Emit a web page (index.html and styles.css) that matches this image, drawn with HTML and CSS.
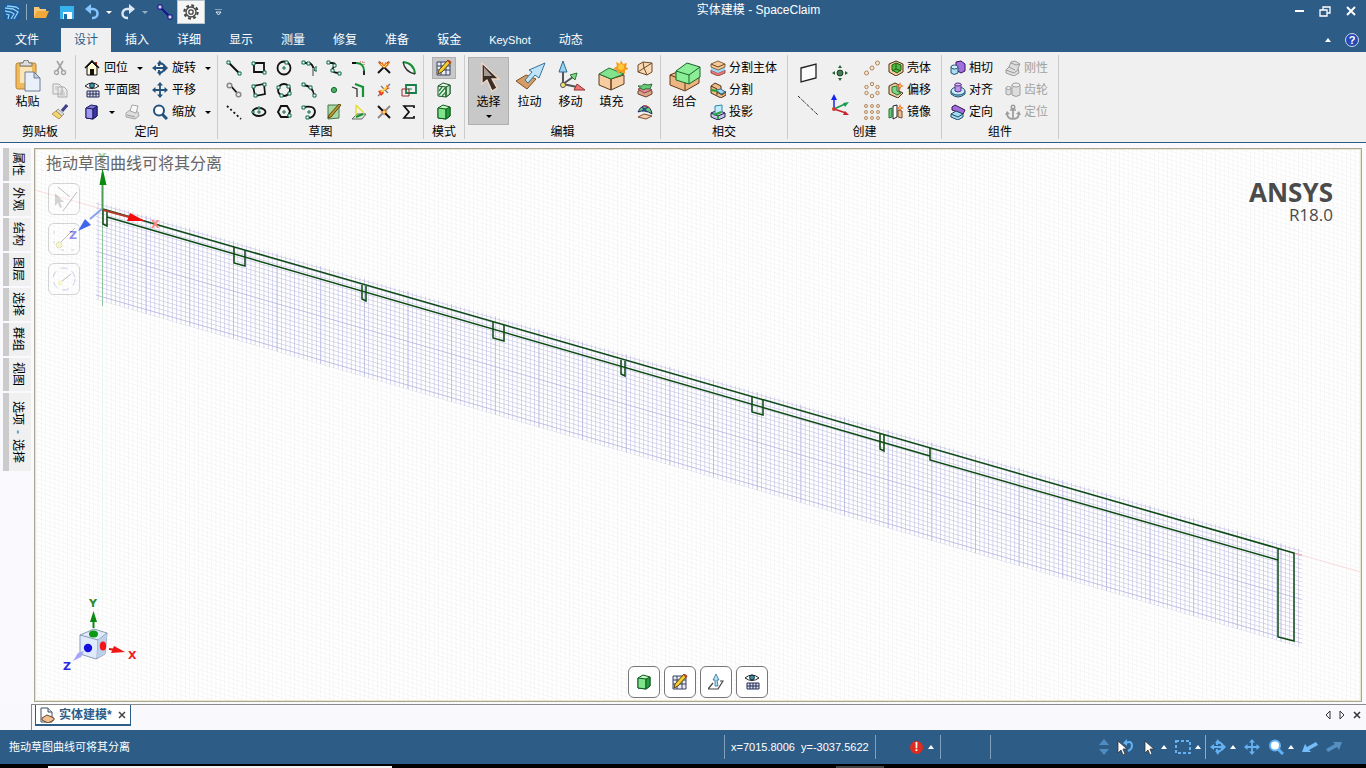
FILE: index.html
```html
<!DOCTYPE html>
<html lang="zh-CN">

<head>
    <meta charset="UTF-8">
    <meta name="viewport" content="width=device-width, initial-scale=1.0">
    <title>实体建模 - SpaceClaim</title>
    <link rel="stylesheet" href="styles.css">
</head>

<body>

    <!-- icons -->
    <svg class="sprite" aria-hidden="true">
        <symbol id="logo" viewBox="0 0 16 16"><rect width="16" height="16" rx="2" fill="#1c5c9c"/><path d="M1 4l8 1 5 3-4 7M1 7l6 1 3 2-3 5M3 2l9 1 3 2M2 10l3 1-1 4" fill="none" stroke="#8fd0f5" stroke-width="1.3"/></symbol>
        <symbol id="folder" viewBox="0 0 16 16"><path d="M1 14V3h5l1 2h6v2" fill="#f7c777"/><path d="M1 14L4 7h12l-3 7z" fill="#f2a93b"/></symbol>
        <symbol id="save" viewBox="0 0 16 16"><path d="M1 2h14v13H1z" fill="#35b3ea"/><path d="M4 8h9v7H4z" fill="#fff"/><path d="M5 10h3v5H5z" fill="#1b6ca8"/></symbol>
        <symbol id="undo" viewBox="0 0 16 16"><path d="M3 5h6a4 4 0 0 1 0 9H8" fill="none" stroke="#86c5ff" stroke-width="2.6"/><path d="M7 0v10L1 5z" fill="#86c5ff"/></symbol>
        <symbol id="redo" viewBox="0 0 16 16"><path d="M13 5H7a4 4 0 0 0 0 9h1" fill="none" stroke="#dce9f4" stroke-width="2.4"/><path d="M9 0v10l6-5z" fill="#dce9f4"/></symbol>
        <symbol id="sketchline" viewBox="0 0 16 16"><path d="M3 3l10 10" stroke="#15138a" stroke-width="2"/><path d="M1 1h4v4H1zM11 11h4v4h-4z" fill="#d6d0f5" stroke="#15138a"/></symbol>
        <symbol id="gear" viewBox="0 0 16 16"><circle cx="8" cy="8" r="6.6" fill="none" stroke="#444" stroke-width="2.2" stroke-dasharray="2.8 2.4"/><circle cx="8" cy="8" r="5" fill="#f3f3f3" stroke="#444" stroke-width="1.3"/><circle cx="8" cy="8" r="2.2" fill="#fff" stroke="#444" stroke-width="1.3"/></symbol>

        <symbol id="paste" viewBox="0 0 32 32"><rect x="4" y="3" width="20" height="26" rx="2" fill="#f0b95b" stroke="#b98432"/><path d="M8 7h12v16H8z" fill="#fbe4b6"/><path d="M8 6V3h3a3 3 0 0 1 6 0h3v3z" fill="#ddd" stroke="#777"/><path d="M13 12h9l6 6v13H13z" fill="#eaf0fa" stroke="#6e7e98"/><path d="M22 12v6h6z" fill="#c4cfe2" stroke="#6e7e98"/></symbol>
        <symbol id="cut" viewBox="0 0 16 16"><path d="M5 1l6 10M11 1L5 11" stroke="#a2a2a2" stroke-width="1.6"/><circle cx="4.500" cy="12.500" r="2" fill="none" stroke="#a2a2a2" stroke-width="1.3"/><circle cx="11.500" cy="12.500" r="2" fill="none" stroke="#a2a2a2" stroke-width="1.3"/></symbol>
        <symbol id="copy" viewBox="0 0 16 16"><path d="M1 2h6l3 3v7H1zM6 5h6l3 3v7H6z" fill="#ececec" stroke="#aaa"/><path d="M8 9h4M8 11h5M8 13h5M3 5h3M3 7h2" stroke="#bbb"/></symbol>
        <symbol id="brush" viewBox="0 0 16 16"><path d="M15 1l-5 6" stroke="#41418e" stroke-width="3"/><path d="M6 5l6 5-2 2-6-5z" fill="#ddd" stroke="#777" stroke-width=".7"/><path d="M4 7l6 5-3 3-7-5z" fill="#f2d676" stroke="#a8853a" stroke-width=".8"/></symbol>
        <symbol id="home" viewBox="0 0 16 16"><path d="M11 2h2v5h-2z" fill="#a31b1b"/><path d="M1 8l7-7 7 7" fill="none" stroke="#111" stroke-width="1.6"/><path d="M3 7l5-5 5 5v8H3z" fill="#fff8d4" stroke="#111"/><path d="M6 9h4v6H6z" fill="#111"/></symbol>
        <symbol id="eyegrid" viewBox="0 0 16 16"><path d="M1 4Q8-2 15 4 8 9 1 4z" fill="#fff" stroke="#222"/><circle cx="8" cy="3.500" r="2.400" fill="#3c95a8" stroke="#123"/><path d="M3 9h12v6H3z" fill="#dfe3ee" stroke="#222b55"/><path d="M3 12h12M6 9v6M9 9v6M12 9v6" stroke="#222b55"/></symbol>
        <symbol id="cube-blue" viewBox="0 0 16 16"><path d="M2 4l5-3 6 1v10l-4 3-7-1z" fill="#7c79d8" stroke="#1c1a5e"/><path d="M2 4l7 1v10l-7-1z" fill="#9d9af0" stroke="#1c1a5e"/><path d="M9 5l4-3v10l-4 3z" fill="#3a36a3" stroke="#1c1a5e"/></symbol>
        <symbol id="printout" viewBox="0 0 16 16"><path d="M2 9l4-3 8 2 1 4-4 3-9-2z" fill="#ddd" stroke="#a6a6a6"/><path d="M6 7l2-6 6 1-2 7z" fill="#f7f7f7" stroke="#a6a6a6"/><path d="M3 11l8 2" stroke="#999"/></symbol>
        <symbol id="rotate" viewBox="0 0 16 16"><path d="M2 8h12" stroke="currentColor" stroke-width="2"/><path d="M4 5v6L0 8zM16 8l-4-4v8zM5 4l3-4 2 5zM5 12l3 4 2-5z" fill="currentColor"/><path d="M8 3q5 1 4 5 0 4-4 5M7 3v3M7 10v3" fill="none" stroke="currentColor" stroke-width="1.900"/></symbol>
        <symbol id="pan" viewBox="0 0 16 16"><path d="M2 8h12M8 2v12" stroke="currentColor" stroke-width="1.8"/><path d="M3.500 5v6L0 8zM12.500 5v6L16 8zM5 3.500h6L8 0zM5 12.500h6L8 16z" fill="currentColor"/></symbol>
        <symbol id="magnify" viewBox="0 0 16 16"><circle cx="7" cy="6.500" r="5" fill="#fff" stroke="currentColor" stroke-width="2"/><path d="M10.500 10.500L15 15" stroke="currentColor" stroke-width="3"/></symbol>

        <symbol id="s-line" viewBox="0 0 16 16"><path d="M3 3l10 10" stroke="#111" stroke-width="2"/><path class="pt" d="M1 1h3v3H1zM12 12h3v3h-3z"/></symbol>
        <symbol id="s-rect" viewBox="0 0 16 16"><path d="M3 3h10v9H3z" fill="none" stroke="#111" stroke-width="1.8"/><path class="pt" d="M1 2h3v3H1zM12 11h3v3h-3z"/></symbol>
        <symbol id="s-circle" viewBox="0 0 16 16"><circle cx="8" cy="8" r="6.500" fill="none" stroke="#111" stroke-width="1.800"/><path class="pt" d="M7 7h2v2H7zM9 1h3v3H9z"/></symbol>
        <symbol id="s-tanarc" viewBox="0 0 16 16"><path d="M2 3h5q5 0 6 8" fill="none" stroke="#111" stroke-width="1.800"/><path d="M12 8v8" stroke="#999" stroke-width="2"/><path class="pt" d="M1 1h3v3H1zM6 2h3v3H6zM14 7h2v4h-2z"/></symbol>
        <symbol id="s-spline" viewBox="0 0 16 16"><path d="M2 3h4q5 0 1 5-2 5 6 5" fill="none" stroke="#111" stroke-width="1.800"/><path class="pt" d="M1 1h3v3H1zM7 4h3v3H7zM5 9h3v3H5zM12 12h3v3h-3z"/></symbol>
        <symbol id="s-fillet" viewBox="0 0 16 16"><path d="M1 3h5M13 10v5" stroke="#111" stroke-width="1.800"/><path d="M5 3q8 0 8 8" fill="none" stroke="#159235" stroke-width="1.800"/><path d="M9 2h4v4" fill="none" stroke="#b34a4a" stroke-dasharray="1 1"/></symbol>
        <symbol id="s-trim" viewBox="0 0 16 16"><path d="M2 13l6-6 6 6M8 7l5-5M8 7L3 2" fill="none" stroke="#111" stroke-width="1.900"/><path d="M2 1l3 2 2-1 1 4 1-4 2 1 3-2-2 5-4 2-4-3z" fill="#f47b21"/><path d="M5 4l3 3 3-3" fill="none" stroke="#ffe95a"/></symbol>
        <symbol id="s-bend" viewBox="0 0 16 16"><path d="M2 2q11 1 12 12" fill="none" stroke="#159235" stroke-width="2"/><path d="M2 2q2 10 12 12" fill="none" stroke="#333" stroke-width="1.300"/></symbol>
        <symbol id="s-tangent" viewBox="0 0 16 16"><path d="M4 3l8 9" stroke="#111" stroke-width="1.800"/><circle cx="3.500" cy="3.500" r="2.300" fill="#eee" stroke="#888" stroke-width="1.500"/><circle cx="12.500" cy="12.500" r="2.300" fill="#eee" stroke="#888" stroke-width="1.500"/></symbol>
        <symbol id="s-rect3" viewBox="0 0 16 16"><path d="M2 4l11-2 1 10-10 2z" fill="none" stroke="#111" stroke-width="1.700"/><path class="pt" d="M1 3h3v3H1zM12 1h3v3h-3zM3 12h3v3H3z"/></symbol>
        <symbol id="s-circle3" viewBox="0 0 16 16"><circle cx="8" cy="8" r="6" fill="none" stroke="#111" stroke-width="1.800"/><path class="pt" d="M1 4h3v3H1zM11 3h3v3h-3zM4 12h3v3H4zM12 10h3v3h-3z"/></symbol>
        <symbol id="s-arc3" viewBox="0 0 16 16"><path d="M2 3q10 1 11 10" fill="none" stroke="#111" stroke-width="1.800"/><path class="pt" d="M1 1h3v3H1zM8 4h3v3H8zM12 12h3v3h-3z"/></symbol>
        <symbol id="s-point" viewBox="0 0 16 16"><circle cx="8" cy="8" r="2.600" fill="#4fae62" stroke="#0b6a2b"/></symbol>
        <symbol id="s-offset" viewBox="0 0 16 16"><path d="M1 5l5 2v8" fill="none" stroke="#333" stroke-width="1.300"/><path d="M4 2l8 3v10" fill="none" stroke="#159235" stroke-width="2.200"/></symbol>
        <symbol id="s-corner" viewBox="0 0 16 16"><path d="M2 14L14 2M5 4l7 7" stroke="#777" stroke-width="1.300"/><path d="M10 2l1 3 3 1-4 2zM2 9l4-1 2 3-3 3z" fill="#e8421b"/><path d="M5 10l6-5" stroke="#ffd944" stroke-width="2"/></symbol>
        <symbol id="s-scale" viewBox="0 0 16 16"><path d="M5 3h10v8H5z" fill="none" stroke="#147f4b" stroke-width="1.800"/><path d="M1 7h7v7H1z" fill="none" stroke="#9c2525"/><path d="M7 7h4" stroke="#147f4b"/></symbol>
        <symbol id="s-dash" viewBox="0 0 16 16"><path d="M1 2l14 13" stroke="#111" stroke-width="1.800" stroke-dasharray="2 2.500"/></symbol>
        <symbol id="s-ellipse" viewBox="0 0 16 16"><ellipse cx="8" cy="8" rx="6.500" ry="4" fill="none" stroke="#111" stroke-width="1.800"/><path class="pt" d="M7 7h2v2H7zM7 3h2v2H7zM1 7h2v2H1z"/></symbol>
        <symbol id="s-polygon" viewBox="0 0 16 16"><path d="M5 2h6l3 5-2 6H5L2 8z" fill="none" stroke="#111" stroke-width="1.900"/><path class="pt" d="M7 7h2v2H7zM12 10h3v3h-3z"/></symbol>
        <symbol id="s-arcsweep" viewBox="0 0 16 16"><path d="M3 3q11-2 11 5-1 6-7 6" fill="none" stroke="#111" stroke-width="1.800"/><path class="pt" d="M1 2h3v3H1zM7 7h2v2H7zM5 12h3v3H5z"/></symbol>
        <symbol id="s-face" viewBox="0 0 16 16"><path d="M2 1h11v13l-11 1z" fill="#a9d8a5" stroke="#49764a"/><path d="M15 1L5 13l-3 1 1-3L13 0z" fill="#b79832" stroke="#5b4812"/></symbol>
        <symbol id="s-project" viewBox="0 0 16 16"><path d="M1 15l5-5h9l-4 5z" fill="#d5eed5" stroke="#666"/><path d="M5 1v11M5 1l8 8" fill="none" stroke="#e6dc2c" stroke-width="1.400"/><path d="M5 13l7-3" stroke="#159235" stroke-width="2"/></symbol>
        <symbol id="s-split" viewBox="0 0 16 16"><path d="M2 14L14 2" stroke="#888" stroke-width="1.800"/><path d="M2 2l12 12" stroke="#111" stroke-width="2"/><path d="M8 4l1 3 3 1-3 1-1 3-1-3-3-1 3-1z" fill="#f45a20"/><circle cx="8" cy="8" r="1.500" fill="#ffe74a"/></symbol>
        <symbol id="s-sigma" viewBox="0 0 16 16"><path d="M13 4V2H3l5 6-5 6h10v-2" fill="none" stroke="#111" stroke-width="1.700"/></symbol>

        <symbol id="m-sketch" viewBox="0 0 16 16"><path d="M1 2h13v13H1z" fill="#e9ebf2" stroke="#394067"/><path d="M1 6h13M1 10h13M5 2v13M10 2v13" stroke="#394067"/><path d="M15 2L6 12l-4 2 1-4L12 0z" fill="#f2cf2d" stroke="#57420d"/><path d="M12 1l3 2" stroke="#c8452c" stroke-width="2"/></symbol>
        <symbol id="m-section" viewBox="0 0 16 16"><path d="M2 4l5-3 7 2v9l-4 3-8-1z" fill="#e7f7e7" stroke="#175225"/><path d="M10 5l4-2v9l-4 3z" fill="#bfe6c2" stroke="#175225"/><path d="M2 4l8 1v10" fill="none" stroke="#175225"/><path d="M3 9l3-4M3 13l6-7M6 14l4-4" stroke="#26833b" stroke-width="1.300"/></symbol>
        <symbol id="m-solid" viewBox="0 0 16 16"><path d="M2 4l5-3 7 2v9l-4 3-8-1z" fill="#c5f8c5" stroke="#0c5a1d"/><path d="M2 4l8 1v10l-8-1z" fill="#7fe38b" stroke="#0c5a1d"/><path d="M10 5l4-2v9l-4 3z" fill="#2c9a3f" stroke="#0c5a1d"/></symbol>

        <symbol id="e-select" viewBox="0 0 32 32"><path d="M9 3v21l5-4 5 11 5-3-5-9h7z" fill="#3b2d28" stroke="#f3d9c4" stroke-width="1.300"/><path d="M11 7v9l8 0z" fill="#a59b96"/></symbol>
        <symbol id="e-pull" viewBox="0 0 32 32"><path d="M2 21l10-6 10 4-9 10z" fill="#d59c65" stroke="#7c5126"/><path d="M31 3L15 10l3 2-7 8 3 3 7-8 4 3z" fill="#bfe4f8" stroke="#33739b"/></symbol>
        <symbol id="e-move" viewBox="0 0 32 32"><path d="M8 24V9M8 24l10-7M8 24l14 3" stroke="#555" stroke-width="2"/><path d="M8 1l4 11H4z" fill="#9bd0ee" stroke="#2a6d92"/><path d="M22 13l-2 7-5-5z" fill="#87d78b" stroke="#257a34"/><path d="M30 30l-11 0 3-6z" fill="#ee7474" stroke="#963030"/><circle cx="8" cy="25" r="2.500" fill="#f4e56c" stroke="#555"/></symbol>
        <symbol id="e-fill" viewBox="0 0 32 32"><path d="M3 14l12 5v11L3 25zM15 19l13-4v9l-13 6z" fill="#f7cd9f" stroke="#5e3b1e"/><path d="M3 14l10-6 15 6-13 5z" fill="#83e38d" stroke="#247132"/><path d="M25 0l2 4 4-1-1 4 3 2-4 1v4l-4-2-4 2v-4l-4-1 4-3-1-4 4 2z" fill="#f49a1d"/><circle cx="25" cy="7" r="3" fill="#ffc73b"/></symbol>
        <symbol id="e-blend" viewBox="0 0 16 16"><path d="M1 5l5-3 9 1v9l-5 3-9-3z" fill="#f9d9b4" stroke="#6f4828"/><path d="M6 2l1 6 8-5M7 8l3 7M7 8l-6 4" fill="none" stroke="#6f4828"/></symbol>
        <symbol id="e-replace" viewBox="0 0 16 16"><path d="M1 9l7-3 7 3v3l-6 3-8-3z" fill="#dba486" stroke="#67422e"/><path d="M1 7l6 4 8-3-5-3z" fill="#ee8b94" stroke="#8b444c"/><path d="M1 4q4 1 6-2 4 2 8 0l-2 5q-5-1-7 1z" fill="#6bc778" stroke="#286f37"/></symbol>
        <symbol id="e-unwrap" viewBox="0 0 16 16"><path d="M1 13l6-3 8 2-6 3z" fill="#f4ceb0" stroke="#804e2f"/><path d="M1 8q3-7 8-6 5 1 6 8-7-5-14-2z" fill="#63c979" stroke="#202a58"/><path d="M5 3l5 5M11 3L5 7" stroke="#26408e" stroke-width="1.500"/><path d="M6 2q5-1 7 3" stroke="#dd362d" fill="none"/></symbol>

        <symbol id="combine" viewBox="0 0 32 32"><path d="M1 15l7-3 22 4v7l-14 8-15-6z" fill="#edb680" stroke="#5f3817"/><path d="M1 15l15 6v9M16 21l14-5" fill="none" stroke="#5f3817"/><path d="M7 11L18 3l13 4v10l-11 7-13-4z" fill="#8cef98" stroke="#176529"/><path d="M7 11l13 4 11-8M20 15v9" fill="none" stroke="#176529"/></symbol>
        <symbol id="splitbody" viewBox="0 0 16 16"><path d="M1 10l7 3 7-3v3l-7 3-7-3z" fill="#f07474" stroke="#7c3a3a" stroke-width=".8"/><path d="M1 7l7 3 7-3v3l-7 3-7-3z" fill="#9bd8f5"/><path d="M1 4l7-3 7 3v3l-7 3-7-3z" fill="#f6c997" stroke="#6c4522" stroke-width=".8"/><path d="M1 4l7 3 7-3" fill="none" stroke="#6c4522"/></symbol>
        <symbol id="split" viewBox="0 0 16 16"><path d="M1 4l4-3 6 3v4l5 2v3l-5 3L1 11z" fill="#edbd87" stroke="#513018"/><path d="M1 4l6 3v6M7 10l5 3 4-3" fill="none" stroke="#513018"/><path d="M6 8l5-1 4 3-4 2z" fill="#a5daf4" stroke="#31718a"/><path d="M1 8l6 1" stroke="#17a529" stroke-width="2"/></symbol>
        <symbol id="project" viewBox="0 0 16 16"><path d="M1 9l7-3 7 3v4l-7 3-7-3z" fill="#c6c4e7" stroke="#23234f"/><path d="M1 9l7 3 7-3M8 12v4" fill="none" stroke="#23234f"/><path d="M5 2l7-1v7l-7 2z" fill="#c2ecff" stroke="#2d88a9"/><path d="M4 11l7-3M8 12v3" stroke="#27a73b" stroke-width="2"/></symbol>

        <symbol id="plane" viewBox="0 0 22 22"><path d="M4 6l15-4v14L4 20z" fill="#fbfbfb" stroke="#222" stroke-width="1.300"/></symbol>
        <symbol id="axis" viewBox="0 0 22 22"><path d="M1 2l20 19" stroke="#222" stroke-dasharray="3 1 1 1"/></symbol>
        <symbol id="point" viewBox="0 0 16 16"><circle cx="8" cy="8" r="3" fill="#477a55" stroke="#174222"/><path d="M8 0l2 3H6zM8 16l2-3H6zM0 8l3-2v4zM16 8l-3-2v4z" fill="#27623a"/></symbol>
        <symbol id="origin" viewBox="0 0 22 22"><path d="M5 15V5" stroke-width="1.500" stroke="#1525f0"/><path d="M5 15l11-5" stroke-width="1.500" stroke="#149c4c"/><path d="M5 15l12 4" stroke-width="1.500" stroke="#ca242b"/><path d="M5 0l3 6H2z" fill="#1525f0"/><path d="M20 8l-4 5-2-4z" fill="#149c4c"/><path d="M20 21l-6 0 2-4z" fill="#ca242b"/><circle cx="5" cy="15" r="2" fill="#c9402c"/></symbol>
        <symbol id="pat-line" viewBox="0 0 16 16"><g class="dots"><circle cx="2.500" cy="13" r="2"/><circle cx="8" cy="8" r="2"/><circle cx="13.500" cy="3" r="2"/></g></symbol>
        <symbol id="pat-circle" viewBox="0 0 16 16"><g class="dots"><circle cx="8" cy="2" r="1.700"/><circle cx="2.500" cy="5" r="1.700"/><circle cx="13.500" cy="5" r="1.700"/><circle cx="2.500" cy="11" r="1.700"/><circle cx="13.500" cy="11" r="1.700"/><circle cx="8" cy="14" r="1.700"/></g></symbol>
        <symbol id="pat-fill" viewBox="0 0 16 16"><g class="dots"><circle cx="2" cy="2" r="1.500"/><circle cx="8" cy="2" r="1.500"/><circle cx="14" cy="2" r="1.500"/><circle cx="2" cy="8" r="1.500"/><circle cx="8" cy="8" r="1.500"/><circle cx="14" cy="8" r="1.500"/><circle cx="2" cy="14" r="1.500"/><circle cx="8" cy="14" r="1.500"/><circle cx="14" cy="14" r="1.500"/></g></symbol>
        <symbol id="shell" viewBox="0 0 16 16"><path d="M1 4l7-3 7 3v8l-7 4-7-4z" fill="#f5cb9a" stroke="#4d3115"/><path d="M4 5l4-2 5 2v5l-4 3-5-3z" fill="#52b93f" stroke="#195e19"/><path d="M8 3v6l-4 2M8 9l5 2" fill="none" stroke="#195e19"/></symbol>
        <symbol id="offset" viewBox="0 0 16 16"><path d="M1 4l6-3 4 2v6l4 2-5 5-9-4z" fill="#f2cda2" stroke="#4d3115"/><path d="M4 5l5-1v5l4 2-4 2-5-3z" fill="#81d58b" stroke="#277439"/><path d="M12 0l1 3 3 1-3 1-1 3-1-3-3-1 3-1z" fill="#f4622b"/><circle cx="12" cy="4" r="1" fill="#ffe34d"/></symbol>
        <symbol id="mirror" viewBox="0 0 16 16"><path d="M5 2l4-1v12l-4 2z" fill="#fff" stroke="#222"/><path d="M1 5l3-1v9l-3 1z" fill="#63cc6e" stroke="#29733a"/><path d="M10 6l4 1v7l-4-1z" fill="#edc293" stroke="#774d25"/><path d="M12 0l1 3 3 1-3 1-1 3-1-3-3-1 3-1z" fill="#f4622b"/><circle cx="12" cy="4" r="1" fill="#ffe34d"/></symbol>

        <symbol id="tangent" viewBox="0 0 16 16"><path d="M6 2l5-1 4 3v7l-4 2-5-3z" fill="#a270dd" stroke="#37135f"/><path d="M1 7v6q3 3 7 0V7z" fill="#a8dff5" stroke="#25556b"/><ellipse cx="4.500" cy="7" rx="3.500" ry="2" fill="#cef0ff" stroke="#25556b"/></symbol>
        <symbol id="align" viewBox="0 0 16 16"><path d="M1 9v3q7 6 14 0V9z" fill="#7fbfe2" stroke="#24536d"/><ellipse cx="8" cy="9" rx="7" ry="4" fill="#c6ebfb" stroke="#24536d"/><path d="M5 2v7q3 2 6 0V2z" fill="#bb94ec" stroke="#593085"/><ellipse cx="8" cy="2.500" rx="3" ry="1.500" fill="#dac3f7" stroke="#593085"/></symbol>
        <symbol id="orient" viewBox="0 0 16 16"><path d="M2 3l3-2 10 5-2 4L2 6z" fill="#a26bdc" stroke="#34144f"/><path d="M1 10l5-3 7 3v3l-5 3-7-3z" fill="#a5dcf5" stroke="#1d4b60"/><path d="M1 10l7 3 5-3" fill="none" stroke="#1d4b60"/></symbol>
        <symbol id="rigid" viewBox="0 0 16 16"><path d="M1 10l3-3 2-5 4-1 5 3-2 4 1 5-5 3-8-3z" fill="#ddd" stroke="#9b9b9b"/><path d="M1 10l8 3 5-4M4 7l6 3M6 3l5 2 4-1" fill="none" stroke="#9b9b9b"/></symbol>
        <symbol id="gearpair" viewBox="0 0 16 16"><path d="M1 6v6q2 2 5 0V6zM7 3v10q4 3 8 0V3z" fill="#ddd" stroke="#a0a0a0"/><ellipse cx="11" cy="3" rx="4" ry="2" fill="#eee" stroke="#a0a0a0"/><ellipse cx="3.500" cy="6" rx="2.500" ry="1.500" fill="#eee" stroke="#a0a0a0"/></symbol>
        <symbol id="anchor" viewBox="0 0 16 16"><path d="M8 4v11M5 6h6M2 9q0 6 6 6t6-6" fill="none" stroke="#9b9b9b" stroke-width="1.700"/><circle cx="8" cy="3" r="1.800" fill="none" stroke="#9b9b9b" stroke-width="1.400"/><path d="M0 11l2-4 3 3zM16 11l-2-4-3 3z" fill="#9b9b9b"/></symbol>

        <symbol id="up-arrow" viewBox="0 0 16 16"><path d="M5 9l-5 6h10l5-8h-3" fill="none" stroke="#444" stroke-width="1.200"/><path d="M8 0l3 6H9l1 6H7V6H5z" fill="#b8def2" stroke="#2e6f94" stroke-width=".8"/></symbol>
        <symbol id="cursor" viewBox="0 0 16 16"><path d="M4 2v12l3-3 2 5 2-1-2-5h4z" fill="#fff" stroke="#333" stroke-width=".8"/></symbol>
        <symbol id="cursor-undo" viewBox="0 0 16 16"><path d="M1 2v12l3-3 2 5 2-1-2-5h4z" fill="#fff" stroke="#333" stroke-width=".8"/><path d="M9 4q6-3 6 3 0 3-4 5" fill="none" stroke="#64b1f3" stroke-width="2"/><path d="M10 0v7L6 4z" fill="#64b1f3"/></symbol>
        <symbol id="marquee" viewBox="0 0 16 16"><path d="M1 2h14v12H1z" fill="none" stroke="#64b1f3" stroke-width="2" stroke-dasharray="3 2"/></symbol>
        <symbol id="arrow-left" viewBox="0 0 16 16"><path d="M0 13l3-8 2 3 9-5 2 3-9 5 2 2z" fill="#75bdfa"/></symbol>
        <symbol id="arrow-right" viewBox="0 0 16 16"><path d="M16 3l-3 8-2-3-9 5-2-3 9-5-2-2z" fill="#568fc2"/></symbol>
        <symbol id="docpart" viewBox="0 0 16 16"><path d="M2 1h7l4 4v10H2z" fill="#fff" stroke="#3a4f68"/><path d="M9 1v4h4" fill="#ddd" stroke="#3a4f68"/><path d="M3 11l5-3 7 3v2l-6 3-6-3z" fill="#efbf91" stroke="#6b4326"/></symbol>
    </svg>

    <header class="titlebar">
        <div class="quick">
            <svg class="icon"><use href="#logo"/></svg>
            <span class="bar"></span>
            <button class="q" aria-label="打开"><svg class="icon"><use href="#folder"/></svg></button>
            <button class="q" aria-label="保存"><svg class="icon"><use href="#save"/></svg></button>
            <button class="q q-menu" aria-label="撤销"><svg class="icon"><use href="#undo"/></svg><i class="caret"></i></button>
            <button class="q q-menu" aria-label="重做"><svg class="icon"><use href="#redo"/></svg><i class="caret dim"></i></button>
            <button class="q q-line" aria-label="直线"><svg class="icon"><use href="#sketchline"/></svg></button>
            <button class="q q-gear" aria-label="选项"><svg class="icon"><use href="#gear"/></svg></button>
            <button class="q q-more" aria-label="自定义"><svg width="7" height="7" viewBox="0 0 7 7"><path d="M0 0h7M1 3h5l-2.500 3z" fill="none" stroke="#dfe9f2"/></svg></button>
        </div>
        <div class="title">实体建模 - SpaceClaim</div>
        <div class="winbtns">
            <button aria-label="最小化"><svg width="12" height="12" viewBox="0 0 12 12"><path d="M2 6h9" stroke="#fff" stroke-width="2"/></svg></button>
            <button aria-label="还原"><svg width="12" height="12" viewBox="0 0 12 12"><path d="M1 5h7v6H1zM4 5V2h7v6H8" fill="none" stroke="#fff" stroke-width="1.300"/></svg></button>
            <button aria-label="关闭"><svg width="12" height="12" viewBox="0 0 12 12"><path d="M2 2l8 8M10 2l-8 8" stroke="#fff" stroke-width="2"/></svg></button>
        </div>
    </header>

    <nav class="tabs">
        <button class="file">文件</button>
        <button class="active">设计</button>
        <button>插入</button>
        <button>详细</button>
        <button>显示</button>
        <button>测量</button>
        <button>修复</button>
        <button>准备</button>
        <button>钣金</button>
        <button class="latin">KeyShot</button>
        <button>动态</button>
        <div class="tabs-right">
            <button class="collapse" aria-label="折叠"><i class="caret up"></i></button>
            <button class="help" aria-label="帮助">?</button>
        </div>
    </nav>

    <section class="ribbon">
        <div class="group g-clip">
            <div class="tools">
                <button class="big"><svg class="icon32"><use href="#paste"/></svg>粘贴</button>
                <div class="stack">
                    <button aria-label="剪切"><svg class="icon"><use href="#cut"/></svg></button>
                    <button aria-label="复制"><svg class="icon"><use href="#copy"/></svg></button>
                    <button aria-label="格式刷"><svg class="icon"><use href="#brush"/></svg></button>
                </div>
            </div>
            <div class="label">剪贴板</div>
        </div>

        <div class="group g-orient">
            <div class="tools">
                <div class="stack first">
                    <button><svg class="icon"><use href="#home"/></svg>回位<i class="caret"></i></button>
                    <button><svg class="icon"><use href="#eyegrid"/></svg>平面图</button>
                    <div class="pair">
                        <button aria-label="视图"><svg class="icon"><use href="#cube-blue"/></svg><i class="caret"></i></button>
                        <button aria-label="快照"><svg class="icon"><use href="#printout"/></svg></button>
                    </div>
                </div>
                <div class="stack navy">
                    <button><svg class="icon"><use href="#rotate"/></svg>旋转<i class="caret"></i></button>
                    <button><svg class="icon"><use href="#pan"/></svg>平移</button>
                    <button><svg class="icon"><use href="#magnify"/></svg>缩放<i class="caret"></i></button>
                </div>
            </div>
            <div class="label">定向</div>
        </div>

        <div class="group g-sketch">
            <div class="sketch-grid">
                <button aria-label="线条"><svg class="icon"><use href="#s-line"/></svg></button>
                <button aria-label="矩形"><svg class="icon"><use href="#s-rect"/></svg></button>
                <button aria-label="圆"><svg class="icon"><use href="#s-circle"/></svg></button>
                <button aria-label="切线弧"><svg class="icon"><use href="#s-tanarc"/></svg></button>
                <button aria-label="样条曲线"><svg class="icon"><use href="#s-spline"/></svg></button>
                <button aria-label="圆角"><svg class="icon"><use href="#s-fillet"/></svg></button>
                <button aria-label="剪掉"><svg class="icon"><use href="#s-trim"/></svg></button>
                <button aria-label="弯曲"><svg class="icon"><use href="#s-bend"/></svg></button>
                <button aria-label="切线"><svg class="icon"><use href="#s-tangent"/></svg></button>
                <button aria-label="三点矩形"><svg class="icon"><use href="#s-rect3"/></svg></button>
                <button aria-label="三点圆"><svg class="icon"><use href="#s-circle3"/></svg></button>
                <button aria-label="三点弧"><svg class="icon"><use href="#s-arc3"/></svg></button>
                <button aria-label="点"><svg class="icon"><use href="#s-point"/></svg></button>
                <button aria-label="偏移曲线"><svg class="icon"><use href="#s-offset"/></svg></button>
                <button aria-label="创建角"><svg class="icon"><use href="#s-corner"/></svg></button>
                <button aria-label="缩放"><svg class="icon"><use href="#s-scale"/></svg></button>
                <button aria-label="构造线"><svg class="icon"><use href="#s-dash"/></svg></button>
                <button aria-label="椭圆"><svg class="icon"><use href="#s-ellipse"/></svg></button>
                <button aria-label="多边形"><svg class="icon"><use href="#s-polygon"/></svg></button>
                <button aria-label="扫掠弧"><svg class="icon"><use href="#s-arcsweep"/></svg></button>
                <button aria-label="面曲线"><svg class="icon"><use href="#s-face"/></svg></button>
                <button aria-label="投影到草图"><svg class="icon"><use href="#s-project"/></svg></button>
                <button aria-label="分割曲线"><svg class="icon"><use href="#s-split"/></svg></button>
                <button aria-label="方程"><svg class="icon"><use href="#s-sigma"/></svg></button>
            </div>
            <div class="label">草图</div>
        </div>

        <div class="group g-mode">
            <div class="stack">
                <button class="on" aria-label="草图模式"><svg class="icon"><use href="#m-sketch"/></svg></button>
                <button aria-label="剖面模式"><svg class="icon"><use href="#m-section"/></svg></button>
                <button aria-label="三维模式"><svg class="icon"><use href="#m-solid"/></svg></button>
            </div>
            <div class="label">模式</div>
        </div>

        <div class="group g-edit">
            <div class="tools">
                <button class="big on"><svg class="icon32"><use href="#e-select"/></svg>选择<i class="caret"></i></button>
                <button class="big"><svg class="icon32"><use href="#e-pull"/></svg>拉动</button>
                <button class="big"><svg class="icon32"><use href="#e-move"/></svg>移动</button>
                <button class="big"><svg class="icon32"><use href="#e-fill"/></svg>填充</button>
                <div class="stack">
                    <button aria-label="融合"><svg class="icon"><use href="#e-blend"/></svg></button>
                    <button aria-label="替换"><svg class="icon"><use href="#e-replace"/></svg></button>
                    <button aria-label="调整面"><svg class="icon"><use href="#e-unwrap"/></svg></button>
                </div>
            </div>
            <div class="label">编辑</div>
        </div>

        <div class="group g-intersect">
            <div class="tools">
                <button class="big"><svg class="icon32"><use href="#combine"/></svg>组合</button>
                <div class="stack">
                    <button><svg class="icon"><use href="#splitbody"/></svg>分割主体</button>
                    <button><svg class="icon"><use href="#split"/></svg>分割</button>
                    <button><svg class="icon"><use href="#project"/></svg>投影</button>
                </div>
            </div>
            <div class="label">相交</div>
        </div>

        <div class="group g-create">
            <div class="tools">
                <div class="refs">
                    <button aria-label="平面"><svg class="icon22"><use href="#plane"/></svg></button>
                    <button aria-label="点"><svg class="icon"><use href="#point"/></svg></button>
                    <button aria-label="轴"><svg class="icon22"><use href="#axis"/></svg></button>
                    <button aria-label="原点"><svg class="icon22"><use href="#origin"/></svg></button>
                </div>
                <div class="stack">
                    <button aria-label="线性阵列"><svg class="icon"><use href="#pat-line"/></svg></button>
                    <button aria-label="圆形阵列"><svg class="icon"><use href="#pat-circle"/></svg></button>
                    <button aria-label="填充阵列"><svg class="icon"><use href="#pat-fill"/></svg></button>
                </div>
                <div class="stack">
                    <button><svg class="icon"><use href="#shell"/></svg>壳体</button>
                    <button><svg class="icon"><use href="#offset"/></svg>偏移</button>
                    <button><svg class="icon"><use href="#mirror"/></svg>镜像</button>
                </div>
            </div>
            <div class="label">创建</div>
        </div>

        <div class="group g-comp">
            <div class="tools">
                <div class="stack">
                    <button><svg class="icon"><use href="#tangent"/></svg>相切</button>
                    <button><svg class="icon"><use href="#align"/></svg>对齐</button>
                    <button><svg class="icon"><use href="#orient"/></svg>定向</button>
                </div>
                <div class="stack">
                    <button disabled><svg class="icon"><use href="#rigid"/></svg>刚性</button>
                    <button disabled><svg class="icon"><use href="#gearpair"/></svg>齿轮</button>
                    <button disabled><svg class="icon"><use href="#anchor"/></svg>定位</button>
                </div>
            </div>
            <div class="label">组件</div>
        </div>
    </section>

    <main class="workspace">
        <aside class="panels">
            <button>属性</button>
            <button>外观</button>
            <button>结构</button>
            <button>图层</button>
            <button>选择</button>
            <button>群组</button>
            <button>视图</button>
            <button class="long">选项<b>-</b>选择</button>
        </aside>

        <div class="viewport">
            <svg class="scene" viewBox="35 149 1326 552" preserveAspectRatio="xMinYMin slice">
                <defs>
                    <pattern id="faint" width="4.365" height="4.365" patternUnits="userSpaceOnUse" patternTransform="translate(102 209) skewY(16.100)">
                        <path d="M0 0H4.365M0 0V4.365" stroke="#ededed" stroke-width=".9"/>
                    </pattern>
                    <pattern id="minor" width="4.365" height="4.365" patternUnits="userSpaceOnUse">
                        <path d="M0 0H4.365M0 0V4.365" stroke="#b9b9e4" stroke-width="1"/>
                    </pattern>
                    <pattern id="major" width="43.650" height="43.650" patternUnits="userSpaceOnUse">
                        <path d="M0 0H43.650M0 0V43.650" stroke="#b0b0e0" stroke-width="1.100"/>
                    </pattern>
                </defs>
                <rect x="0" y="100" width="2000" height="1200" fill="url(#faint)"/>

                <!-- sketch plane grid -->
                <g transform="translate(102 209) skewY(16.100)">
                    <rect x="-6" y="-6" width="1206" height="98" fill="url(#minor)"/>
                    <rect x="-6" y="-6" width="1206" height="98" fill="url(#major)"/>
                </g>
                <path d="M35 190L102 209M1294 553L1361 572" stroke="#f9dcdc"/>
                <path d="M1294 553l8 2" stroke="#f3a3a8"/>
                <path d="M102.500 209V306" stroke="#8fc3a2"/>
                <path d="M102.500 306V600" stroke="#ecf5ee"/>

                <!-- sketch curves -->
                <g fill="none" stroke="#0c4a12" stroke-width="1.500">
                    <path d="M103 209L1294 553V641L1278 637V549"/>
                    <path d="M107 217L930 456M930 448V460L1278 560"/>
                    <path d="M103 209V224L107 226V210"/>
                    <path d="M362 285V299L366 301V286"/>
                    <path d="M621 360V374L625 376V361"/>
                    <path d="M880 434V449L884 451V435"/>
                    <path d="M234 247V263L245 266V250"/>
                    <path d="M493 322V338L504 341V325"/>
                    <path d="M752 397V412L763 415V400"/>
                </g>

                <!-- origin triad -->
                <path d="M102.500 209V184" stroke="#4d9c57" stroke-width="2"/>
                <path d="M102.500 168l4 17h-7z" fill="#0a8a12"/>
                <path d="M103 210l26 7" stroke="#b43a2c" stroke-width="2"/>
                <path d="M145 221l-18 0 3-8z" fill="#f40b0b"/>
                <path d="M102 209L90 219" stroke="#8ba2e8" stroke-width="2"/>
                <path d="M78 231l7-12 6 6z" fill="#3f67ec"/>
                <text class="ax" x="98" y="161" fill="#9fcfa4">Y</text>
                <text class="ax" x="151" y="228" fill="#f38b80">X</text>
                <text class="ax" x="69" y="239" fill="#5a5ae0">Z</text>

                <!-- view cube -->
                <g>
                    <path d="M80 635l14-6 13 4-2 21-9 5-16-5z" fill="#dfeafa" stroke="#8a9bb5"/>
                    <path d="M80 635l18 5 9-7M98 640l-1 19" fill="none" stroke="#8a9bb5"/>
                    <path d="M98 640l9-6-2 20-8 4z" fill="#bfd0ea"/>
                    <ellipse cx="93.500" cy="634" rx="4.500" ry="3.500" fill="#0b9a12"/>
                    <circle cx="88" cy="648" r="4.200" fill="#1310dd"/>
                    <ellipse cx="103" cy="646" rx="3.200" ry="4.500" fill="#f21616"/>
                    <path d="M93.500 628v-8" stroke="#0b8a12" stroke-width="2"/>
                    <path d="M93.500 611l3.500 11h-7z" fill="#0b8a12"/>
                    <path d="M109 649l7 1" stroke="#e21414" stroke-width="2"/>
                    <path d="M125 652l-14 1 3-7z" fill="#f21616"/>
                    <path d="M73 661l5-8 6-2-3 6z" fill="#a7a5f7"/>
                    <text class="ax" x="89" y="607" fill="#2c8a31">Y</text>
                    <text class="ax" x="128" y="659" fill="#ee2222">X</text>
                    <text class="ax" x="63" y="670" fill="#2a28e0">Z</text>
                </g>
            </svg>

            <div class="hud">
                <p>拖动草图曲线可将其分离</p>
                <button aria-label="选择曲线"><svg viewBox="0 0 30 30"><path d="M6 9v13l3-3 2 5 2-1-2-5h4z" fill="#777"/><path d="M9 3l12 10M28 8L14 27" stroke="#333"/></svg></button>
                <button aria-label="约束"><svg viewBox="0 0 30 30"><path d="M26 4L11 19" stroke="#333"/><circle cx="10" cy="21" r="3" fill="#f2e96b" stroke="#a6a02c"/><path d="M5 7v12M12 26h14" stroke="#4a9a58" stroke-dasharray="3 7"/></svg></button>
                <button aria-label="旋转草图"><svg viewBox="0 0 30 30"><circle cx="15" cy="15" r="11" fill="none" stroke="#4a6ac0" stroke-dasharray="7 5"/><path d="M22 10L12 18" stroke="#333"/><circle cx="11" cy="19" r="2.500" fill="#f2e96b"/></svg></button>
            </div>

            <div class="brand">
                <strong>ANSYS</strong>
                <span>R18.0</span>
            </div>

            <div class="modes">
                <button aria-label="三维模式"><svg class="icon"><use href="#m-solid"/></svg></button>
                <button aria-label="草图"><svg class="icon"><use href="#m-sketch"/></svg></button>
                <button aria-label="移动栅格"><svg class="icon"><use href="#up-arrow"/></svg></button>
                <button aria-label="平面图"><svg class="icon"><use href="#eyegrid"/></svg></button>
            </div>
        </div>
    </main>

    <div class="docs">
        <div class="doc">
            <svg class="icon"><use href="#docpart"/></svg>
            <a href="#">实体建模*</a>
            <button aria-label="关闭文档"><svg width="8" height="8" viewBox="0 0 8 8"><path d="M1 1l6 6M7 1L1 7" stroke="#444" stroke-width="1.500"/></svg></button>
        </div>
        <div class="doc-nav">
            <button aria-label="上一个"><svg width="6" height="8" viewBox="0 0 6 8"><path d="M5 0v8L1 4z" fill="none" stroke="#333"/></svg></button>
            <button aria-label="下一个"><svg width="6" height="8" viewBox="0 0 6 8"><path d="M1 0v8l4-4z" fill="none" stroke="#333"/></svg></button>
            <button aria-label="关闭"><svg width="8" height="8" viewBox="0 0 8 8"><path d="M1 1l6 6M7 1L1 7" stroke="#333" stroke-width="1.500"/></svg></button>
        </div>
    </div>

    <footer class="status">
        <div class="msg">拖动草图曲线可将其分离</div>
        <div class="cell coords">x=7015.8006&nbsp; y=-3037.5622</div>
        <div class="cell errors"><button aria-label="错误"><span class="err">!</span><i class="caret up"></i></button></div>
        <div class="cell blank"></div>
        <div class="cell view">
            <button aria-label="向上选择"><svg width="10" height="16" viewBox="0 0 10 16"><path d="M5 0l5 6H0zM5 16l5-6H0z" fill="#4e8cc2"/></svg></button>
            <button aria-label="还原选择"><svg class="icon"><use href="#cursor-undo"/></svg></button>
            <button aria-label="选择"><svg class="icon"><use href="#cursor"/></svg><i class="caret up"></i></button>
            <button aria-label="框选"><svg class="icon"><use href="#marquee"/></svg><i class="caret up"></i></button>
            <span class="bar"></span>
            <button aria-label="旋转"><svg class="icon"><use href="#rotate"/></svg><i class="caret up"></i></button>
            <button aria-label="平移"><svg class="icon"><use href="#pan"/></svg></button>
            <button aria-label="缩放"><svg class="icon"><use href="#magnify"/></svg><i class="caret up"></i></button>
            <button aria-label="上一视图"><svg class="icon"><use href="#arrow-left"/></svg></button>
            <button aria-label="下一视图"><svg class="icon"><use href="#arrow-right"/></svg></button>
        </div>
    </footer>
    <div class="taskbar"><span class="search"></span><span class="task"></span></div>

</body>

</html>
```
FILE: styles.css
```css
* {
    box-sizing: border-box;
}

body {
    margin: 0;
    height: 100vh;
    display: flex;
    flex-direction: column;
    overflow: hidden;
    background-color: #f9f9fd;
    color: #000;
    font-family: "Liberation Sans", "Noto Sans CJK SC", sans-serif;
    font-size: 12px;
    line-height: 16px;
}

button {
    margin: 0;
    padding: 0;
    border: 0;
    background: none;
    color: inherit;
    font: inherit;
    white-space: nowrap;
    display: flex;
    align-items: center;
    justify-content: center;
}

.sprite {
    position: absolute;
    width: 0;
    height: 0;
}

.icon {
    width: 16px;
    height: 16px;
    flex: none;
}

.icon22 {
    width: 22px;
    height: 22px;
}

.icon32 {
    width: 32px;
    height: 32px;
    flex: none;
}

.pt {
    fill: #fff;
    stroke: #0b6b45;
}

.dots {
    fill: #fbe6cf;
    stroke: #ad8560;
}

.caret {
    width: 0;
    height: 0;
    border-left: 3px solid transparent;
    border-right: 3px solid transparent;
    border-top: 3px solid currentColor;
}

.caret.up {
    border-top: 0;
    border-bottom: 4px solid #fff;
}

.caret.dim {
    opacity: 0.5;
}

.bar {
    width: 1px;
    height: 16px;
    background-color: #8fabc4;
}

/* title bar */
.titlebar {
    display: flex;
    align-items: flex-start;
    height: 28px;
    flex: none;
    background-color: #2d5d87;
    color: #fff;
}

.quick {
    display: flex;
    align-items: center;
    height: 24px;
    padding-left: 4px;
}

.quick .bar {
    margin: 0 1px 0 6px;
}

.q {
    width: 26px;
    height: 24px;
}

.q-menu {
    width: 36px;
    gap: 6px;
}

.q-line {
    width: 25px;
}

.q-gear {
    width: 28px;
    background-color: #f6f6f6;
    border: 1px solid #b9c6d2;
}

.title {
    flex: 1;
    text-align: center;
    padding-top: 2px;
}

.winbtns {
    display: flex;
    padding-right: 2px;
}

.winbtns button {
    width: 26px;
    height: 22px;
}

/* tabs */
.tabs {
    display: flex;
    flex: none;
    height: 24px;
    background-color: #2d5d87;
    color: #fff;
}

.tabs > button {
    height: 24px;
    padding: 0 14px;
}

.tabs .file {
    padding: 0 15px;
    margin-right: 7px;
}

.tabs .active {
    padding: 0 13px;
    background-color: #f0f0f0;
    color: #2d5d87;
}

.tabs .latin {
    font-size: 11px;
}

.tabs-right {
    margin-left: auto;
    display: flex;
    align-items: center;
    gap: 14px;
    padding-right: 7px;
}

.help {
    width: 14px;
    height: 14px;
    border: 1px solid #cfd8e6;
    border-radius: 50%;
    background-color: #2348b8;
    font-weight: bold;
    font-size: 11px;
}

/* ribbon */
.ribbon {
    display: flex;
    flex: none;
    padding-top: 3px;
    padding-left: 5px;
    height: 91px;
    background-color: #f0f0f0;
    border-bottom: 1px solid #2d5d87;
}

.group {
    display: flex;
    flex-direction: column;
    height: 84px;
    padding-top: 2px;
    border-right: 1px solid #cbcbcb;
}

.group .label {
    text-align: center;
    line-height: 18px;
}

.tools {
    display: flex;
    height: 66px;
}

.stack button,
.pair {
    display: flex;
    height: 22px;
    gap: 4px;
    justify-content: flex-start;
}

.stack .caret {
    margin-left: 5px;
}

.big {
    flex-direction: column;
    justify-content: flex-start;
    gap: 2px;
    width: 41px;
    height: 68px;
    padding-top: 3px;
}

.big .caret {
    margin-top: 3px;
}

.on {
    background-color: #c8c8c8;
    border: 1px solid #b0b0b0;
}

.big.on {
    padding-top: 2px;
}

.g-clip .tools {
    padding-left: 2px;
    padding-right: 7px;
    gap: 4px;
}

.g-orient .tools {
    padding: 0 6px 0 8px;
    gap: 9px;
}

.g-orient .pair {
    gap: 9px;
}

.navy svg {
    color: #24527c;
}

.sketch-grid {
    display: grid;
    grid-template-columns: repeat(8, 25px);
    grid-auto-rows: 22px;
    padding: 0 2px 0 3px;
}

.g-mode .stack {
    padding: 0 8px;
}

.g-mode .stack button {
    width: 24px;
    justify-content: center;
}

.g-edit .tools {
    padding: 0 7px 0 3px;
}

.g-edit .stack {
    padding-left: 5px;
}

.g-intersect .tools {
    padding: 0 10px 0 3px;
    gap: 5px;
}

.g-intersect .stack button,
.g-create .stack button,
.g-comp .stack button {
    gap: 3px;
}

.g-create .tools {
    padding: 0 10px 0 4px;
    gap: 8px;
}

.refs {
    display: grid;
    grid-template-columns: 32px 32px;
    grid-auto-rows: 32px;
}

.g-comp .tools {
    padding: 0 10px 0 8px;
    gap: 12px;
}

.stack button:disabled {
    color: #a2a2a2;
}

/* workspace */
.workspace {
    display: flex;
    flex: 1;
    min-height: 0;
    padding: 5px 4px 2px 3px;
    background-color: #fafafe;
}

.panels {
    display: flex;
    flex-direction: column;
    gap: 2px;
    width: 31px;
    flex: none;
}

.panels button {
    width: 28px;
    height: 33px;
    border-left: 6px solid #cbcbcb;
    background-color: #f0f0f0;
    writing-mode: vertical-rl;
    text-orientation: sideways;
    padding-right: 4px;
}

.panels .long {
    height: 78px;
}

.panels b {
    margin: 5px 0;
    color: #4a8fc4;
}

.viewport {
    position: relative;
    flex: 1;
    border: 1px solid #a9a791;
    outline: 1px solid #e9e6d0;
    outline-offset: -2px;
    background-color: #fff;
    overflow: hidden;
}

.scene {
    display: block;
    width: 100%;
    height: 100%;
}

.ax {
    font: bold 11px "DejaVu Sans", sans-serif;
}

.hud {
    position: absolute;
    left: 11px;
    top: 4px;
    display: flex;
    flex-direction: column;
    gap: 8px;
}

.hud p {
    margin: 0;
    font-size: 16px;
    line-height: 22px;
    color: #666;
}

.hud button {
    width: 32px;
    height: 32px;
    margin-left: 2px;
    border: 1px solid #777;
    border-radius: 6px;
    background-color: #fff;
    opacity: 0.3;
}

.brand {
    position: absolute;
    top: 28px;
    right: 28px;
    display: flex;
    flex-direction: column;
    align-items: flex-end;
    font-family: "Open Sans", sans-serif;
    color: #4b4b4b;
}

.brand strong {
    font-size: 26px;
    line-height: 30px;
    font-weight: 700;
}

.brand span {
    font-size: 17px;
    line-height: 16px;
}

.modes {
    position: absolute;
    left: 0;
    right: 0;
    bottom: 3px;
    display: flex;
    justify-content: center;
    gap: 4px;
}

.modes button {
    width: 32px;
    height: 32px;
    border: 1px solid #777;
    border-radius: 6px;
    background-color: #fff;
}

/* document tabs */
.docs {
    display: flex;
    flex: none;
    justify-content: space-between;
    height: 26px;
    margin-left: 31px;
    border-top: 1px solid #8a8a8a;
    border-left: 1px solid #8a8a8a;
}

.doc {
    display: flex;
    align-items: center;
    gap: 4px;
    height: 21px;
    margin-left: 3px;
    padding: 0 4px 0 3px;
    border: 1px solid #2d5d87;
    border-top: 0;
    border-bottom-width: 2px;
    background-color: #fff;
}

.doc a {
    margin-right: 2px;
    color: #2d5d87;
    font-weight: bold;
    text-decoration: none;
}

.doc-nav {
    display: flex;
    align-items: center;
    gap: 8px;
    height: 20px;
    padding-right: 5px;
}

/* status bar */
.status {
    display: flex;
    align-items: center;
    flex: none;
    height: 34px;
    background-color: #2d5d87;
    color: #fff;
}

.msg {
    flex: 1;
    padding-left: 9px;
    font-size: 11px;
}

.cell {
    height: 24px;
    display: flex;
    align-items: center;
    border-left: 1px solid #7f9fbc;
}

.coords {
    width: 151px;
    padding-left: 6px;
    font-size: 11px;
}

.errors {
    width: 65px;
    padding-left: 34px;
}

.errors button {
    gap: 5px;
}

.err {
    width: 13px;
    height: 13px;
    line-height: 13px;
    border-radius: 50%;
    background-color: #e02b20;
    font-weight: bold;
}

.blank {
    width: 50px;
}

.view {
    width: 376px;
    justify-content: flex-end;
    gap: 8px;
    padding-right: 24px;
    color: #64b1f3;
}

.view button {
    gap: 4px;
}

.view .bar {
    height: 24px;
    margin: 0 -4px;
}

.taskbar {
    display: flex;
    justify-content: space-between;
    flex: none;
    height: 4px;
    padding: 2px 482px 0 48px;
    background-color: #000;
}

.search {
    width: 344px;
    background-color: #f2f2f2;
}

.task {
    width: 48px;
    background-color: #444;
}
```
